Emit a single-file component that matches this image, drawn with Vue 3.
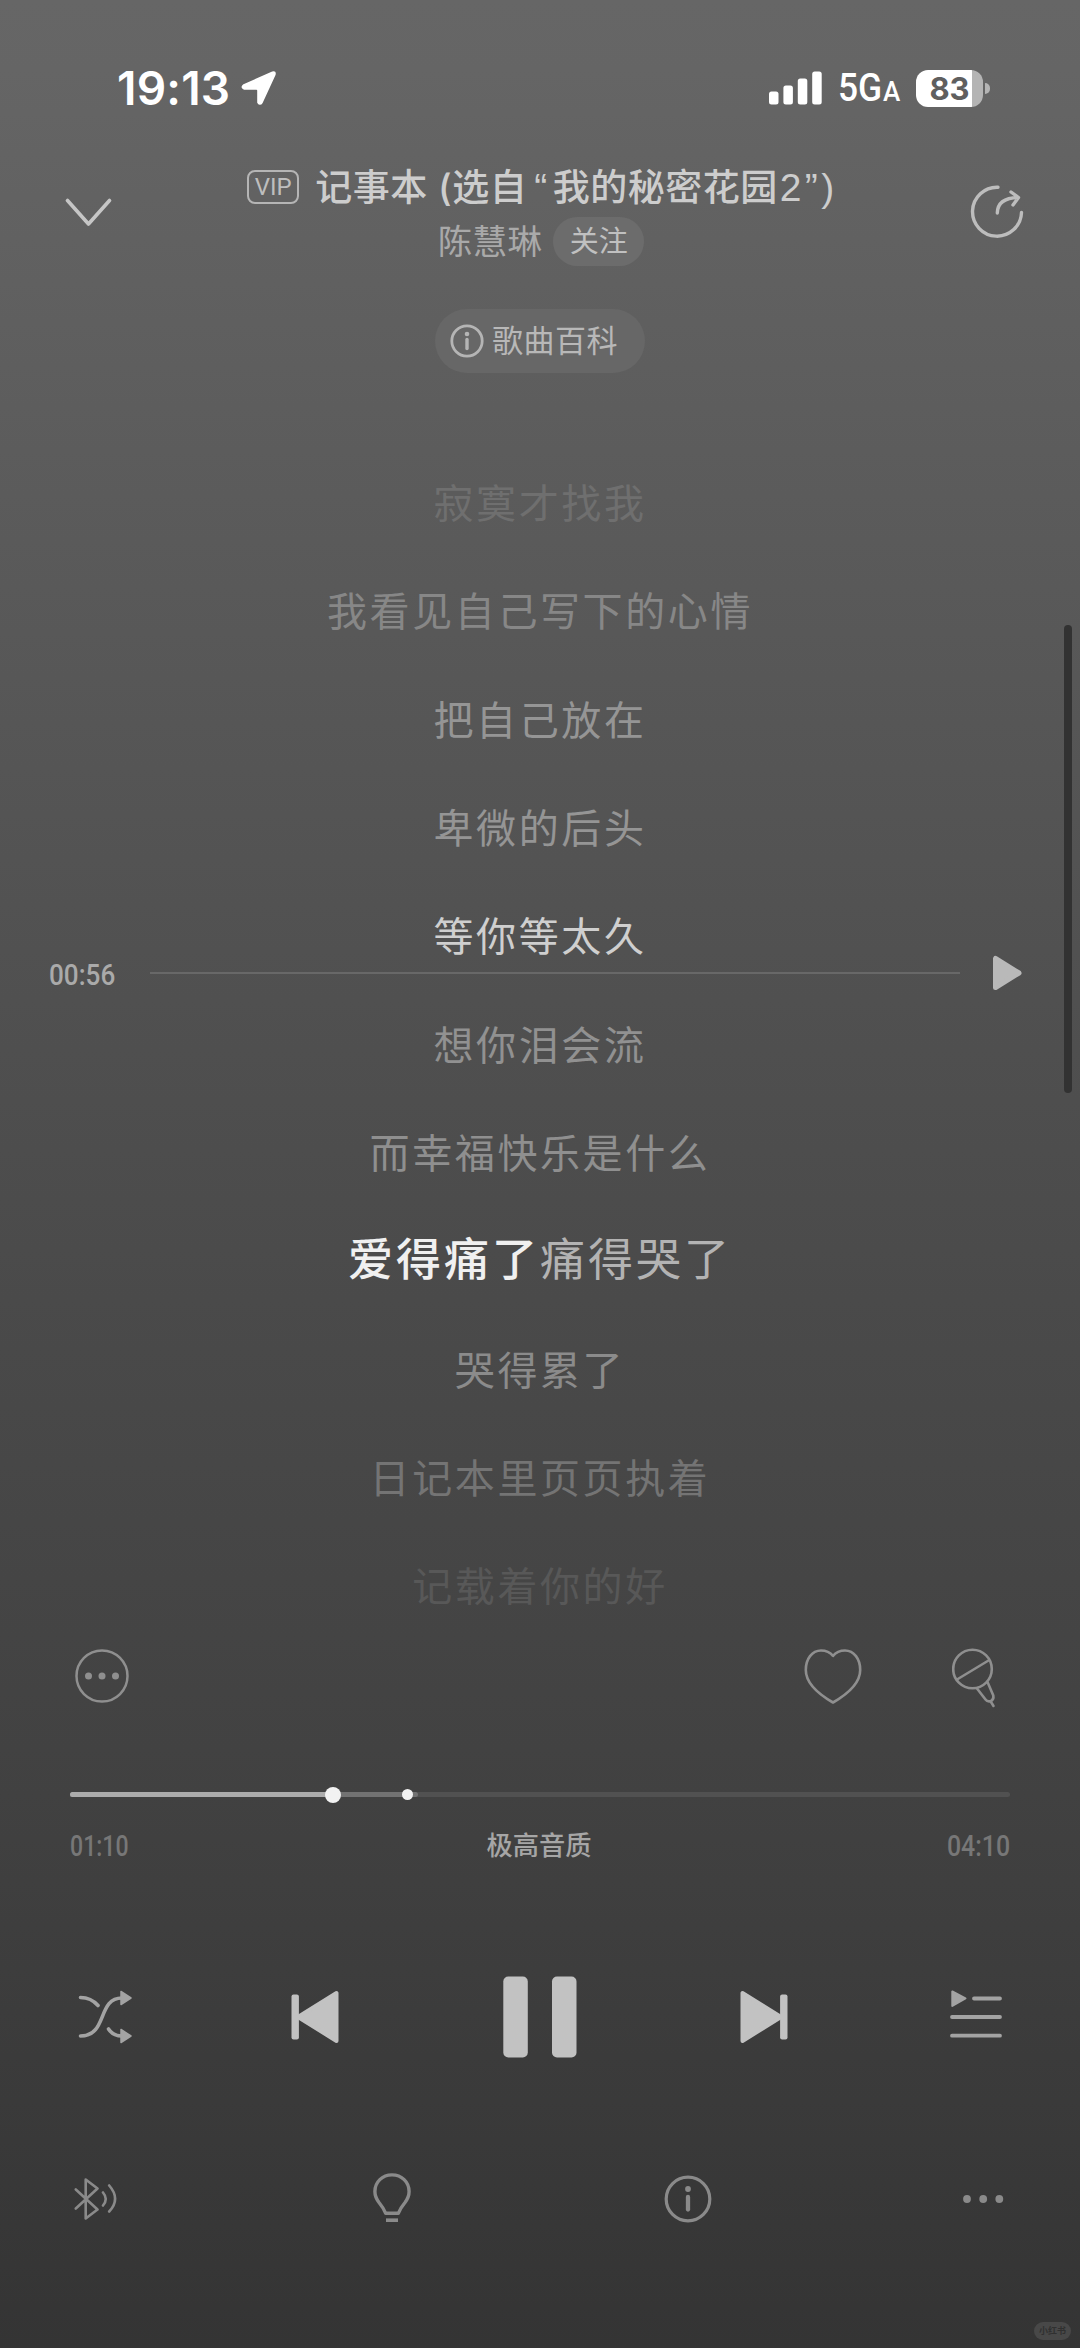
<script setup>
const lyrics = [
  { text: '寂寞才找我', tone: 'l0' },
  { text: '我看见自己写下的心情', tone: 'l1' },
  { text: '把自己放在', tone: 'l2' },
  { text: '卑微的后头', tone: 'l3' },
  { text: '等你等太久', tone: 'picked' },
  { text: '想你泪会流', tone: 'l4' },
  { text: '而幸福快乐是什么', tone: 'l5' },
  { sung: '爱得痛了', text: '痛得哭了', tone: 'current' },
  { text: '哭得累了', tone: 'l6' },
  { text: '日记本里页页执着', tone: 'l7' },
  { text: '记载着你的好', tone: 'l8' },
]
const played = 28
const buffered = 37
const mark = 35.9
</script>

<template>
  <main class="player">
    <header class="status">
      <span class="clock">19:13</span>
      <svg class="locate" width="36" height="36" viewBox="0 0 36 36">
        <path d="M2.8 15 31.5 2.2Q34.6 1.3 33.8 4.6L21 32.5Q19 35.5 17 32.5V20.5Q17 19 15.5 19H3.3Q-.4 17.500 2.800 15Z" fill="#fff" stroke="#fff" stroke-width="1.600" stroke-linejoin="round" />
      </svg>
      <svg class="signal" width="54" height="34" viewBox="0 0 54 34">
        <g fill="#fff">
          <rect x="0" y="20.500" width="9.500" height="13" rx="2.500" />
          <rect x="14.400" y="14.500" width="9.500" height="19" rx="2.500" />
          <rect x="28.800" y="7.500" width="9.500" height="26" rx="2.500" />
          <rect x="43.200" y="0.500" width="9.500" height="33" rx="2.500" />
        </g>
      </svg>
      <span class="net">5G<small>A</small></span>
      <span class="battery"><b>83</b></span>
      <i class="nub"></i>
    </header>

    <section class="head">
      <svg class="down" width="47" height="30" viewBox="0 0 47 30">
        <path d="M2.500 2.500 23.500 26 44.500 2.500" fill="none" stroke="#c6c6c6" stroke-width="3.600" stroke-linecap="round" stroke-linejoin="round" />
      </svg>
      <div class="song">
        <div class="title"><span class="vip">VIP</span><h1>记事本 (选自<q class="open">“</q>我的秘密花园<q class="close">2”)</q></h1></div>
        <div class="artist"><span>陈慧琳</span><button class="follow">关注</button></div>
      </div>
      <svg class="share" width="54" height="54" viewBox="0 0 54 54">
        <g fill="none" stroke="#bdbdbd" stroke-width="3.400" stroke-linecap="round" stroke-linejoin="round">
          <path d="M28 2.200A24.500 24.500 0 1 0 51.500 27.500" />
          <path d="M27.300 28C27.500 18 35 12.800 48 12.500M41 7 48.500 12.500 43 20" />
        </g>
      </svg>
    </section>

    <button class="wiki">
      <svg width="34" height="34" viewBox="0 0 34 34">
        <circle cx="17" cy="17" r="15.200" fill="none" stroke="#b5b5b5" stroke-width="2.800" />
        <circle cx="17" cy="10" r="2.300" fill="#b5b5b5" />
        <path d="M17 15.500V24.500" stroke="#b5b5b5" stroke-width="3.400" stroke-linecap="round" />
      </svg>
      <span>歌曲百科</span>
    </button>

    <section class="lyrics">
      <p v-for="(l, i) in lyrics" :key="i" :class="l.tone"><b v-if="l.sung">{{ l.sung }}</b>{{ l.text }}</p>
      <div class="seek">
        <time class="num">00:56</time>
        <i></i>
        <svg width="30" height="36" viewBox="0 0 30 36">
          <path d="M3.500 3.500V32.500L27 18Z" fill="#b9b9b9" stroke="#b9b9b9" stroke-width="5" stroke-linejoin="round" />
        </svg>
      </div>
    </section>

    <section class="actions">
      <svg width="54" height="54" viewBox="0 0 54 54">
        <circle cx="27" cy="27" r="25.500" fill="none" stroke="#8f8f8f" stroke-width="2.500" />
        <g fill="#8f8f8f"><circle cx="13.500" cy="27" r="3.500" /><circle cx="27" cy="27" r="3.500" /><circle cx="40.500" cy="27" r="3.500" /></g>
      </svg>
      <svg class="heart" width="58" height="56" viewBox="0 0 58 56">
        <path d="M29 7.800C25 3 20.500 2.500 17 2.500 8 2.500 1.800 11 1.800 22 1.800 36 16 47 29 54.500 42 47 56.200 36 56.200 22 56.200 11 50 2.500 41 2.500 37.500 2.500 33 3 29 7.800Z" fill="none" stroke="#8f8f8f" stroke-width="2.600" stroke-linejoin="round" />
      </svg>
      <svg class="mic" width="44" height="60" viewBox="0 0 44 60">
        <g fill="none" stroke="#8f8f8f" stroke-width="2.600" stroke-linecap="round" stroke-linejoin="round">
          <circle cx="20.500" cy="21" r="19.300" />
          <path d="M5 31.500 36.500 12.500M25 40.500 33.500 51.500Q35.500 54.300 39 53Q42 51.500 41.300 47.500L35.500 34M39 54 41.500 58" />
        </g>
      </svg>
    </section>

    <section class="progress">
      <div class="track">
        <i class="buffer" :style="{ width: buffered + '%' }"></i>
        <i class="done" :style="{ width: played + '%' }"></i>
        <i class="knob" :style="{ left: played + '%' }"></i>
        <i class="mark" :style="{ left: mark + '%' }"></i>
      </div>
      <div class="times">
        <time class="num elapsed">01:10</time>
        <span>极高音质</span>
        <time class="num total">04:10</time>
      </div>
    </section>

    <nav class="controls">
      <svg width="54" height="54" viewBox="0 0 54 54">
        <g fill="none" stroke="#a3a3a3" stroke-width="3.600" stroke-linecap="round">
          <path d="M2.500 7.500Q13 7.500 20 15.500M2.500 46C30 46 19 8 44 8M30.500 39Q35 46 44 46" />
        </g>
        <g fill="#a3a3a3" stroke="#a3a3a3" stroke-width="1.500" stroke-linejoin="round"><path d="M43 1.500V14.500L53 8ZM43 39.500V52.500L53 46Z" /></g>
      </svg>
      <svg class="prev" width="48" height="54" viewBox="0 0 48 54">
        <rect x="0.500" y="4.500" width="7.400" height="45" rx="2" fill="#c2c2c2" />
        <path d="M45.500 3V51L7 27Z" fill="#c2c2c2" stroke="#c2c2c2" stroke-width="4" stroke-linejoin="round" />
      </svg>
      <svg class="pause" width="74" height="82" viewBox="0 0 74 82">
        <rect x="0.300" y="0.500" width="24.500" height="81" rx="5" fill="#c2c2c2" />
        <rect x="49" y="0.500" width="24.500" height="81" rx="5" fill="#c2c2c2" />
      </svg>
      <svg class="next" width="48" height="54" viewBox="0 0 48 54">
        <rect x="40.100" y="4.500" width="7.400" height="45" rx="2" fill="#c2c2c2" />
        <path d="M2.500 3V51L41 27Z" fill="#c2c2c2" stroke="#c2c2c2" stroke-width="4" stroke-linejoin="round" />
      </svg>
      <svg class="queue" width="52" height="54" viewBox="0 0 52 54">
        <path d="M2.300 1.500V16L15.500 8.500Z" fill="#a3a3a3" stroke="#a3a3a3" stroke-width="2" stroke-linejoin="round" />
        <path d="M24 8.500H50M2 27H50M2 45.700H50" stroke="#a3a3a3" stroke-width="3.800" stroke-linecap="round" />
      </svg>
    </nav>

    <nav class="tools">
      <svg class="bt" width="44" height="44" viewBox="0 0 44 44">
        <g fill="none" stroke="#8a8a8a" stroke-width="2.600" stroke-linecap="round" stroke-linejoin="round">
          <path d="M1.800 12.500 23.500 32.500 11.700 41.500V2.500L23.500 11.500 1.800 31.500M29 15.500Q34.500 22 29 28.500M35.200 8.500Q47 22 35.200 34.500" />
        </g>
      </svg>
      <svg class="bulb" width="38" height="52" viewBox="0 0 38 52">
        <path d="M12.700 40.300Q10.500 35 6 29.500C2.500 25 1.900 22 1.900 18.600 1.900 9 9.300 1.900 19 1.900S36.100 9 36.100 18.600C36.100 22 35.500 25 32 29.500Q27.500 35 25.300 40.300Z" fill="none" stroke="#8a8a8a" stroke-width="3.400" stroke-linejoin="round" />
        <path d="M13 47.200H25" stroke="#8a8a8a" stroke-width="3.600" />
      </svg>
      <svg class="about" width="48" height="48" viewBox="0 0 48 48">
        <circle cx="24" cy="24" r="21.800" fill="none" stroke="#8a8a8a" stroke-width="3.200" />
        <circle cx="24" cy="14" r="2.900" fill="#8a8a8a" />
        <path d="M24 22V34.500" stroke="#8a8a8a" stroke-width="4.300" stroke-linecap="round" />
      </svg>
      <svg width="42" height="10" viewBox="0 0 42 10">
        <g fill="#8a8a8a"><circle cx="5" cy="5" r="3.900" /><circle cx="21.200" cy="5" r="3.900" /><circle cx="37.300" cy="5" r="3.900" /></g>
      </svg>
    </nav>

    <i class="scrollbar"></i>
    <span class="stamp">小红书</span>
  </main>
</template>

<style>
body { margin: 0; }
</style>

<style scoped>
* { box-sizing: border-box; }
.player {
  position: relative;
  width: 1080px;
  height: 2348px;
  display: flex;
  flex-direction: column;
  overflow: hidden;
  font-family: Inter, "Noto Sans CJK SC", sans-serif;
  background: linear-gradient(#666 0, #656565 70px, #5c5c5c 450px, #515151 950px, #494949 1350px, #424242 1750px, #3a3a3a 2100px, #343434 2348px);
}
svg { display: block; flex: none; }
button { border: 0; font-family: inherit; padding: 0; }

.status {
  height: 140px;
  padding: 36px 90px 0 117px;
  display: flex;
  align-items: center;
  color: #fff;
}
.clock { width: 124px; font-size: 46px; font-weight: 600; letter-spacing: .2px; white-space: nowrap; }
.signal { margin-left: auto; }
.net { width: 62px; margin-left: 15px; font: 500 38px/1 Roboto, sans-serif; white-space: nowrap; transform: scaleX(.93); transform-origin: 0 50%; }
.net small { font-size: 28px; margin-left: 1px; }
.battery {
  width: 67px;
  height: 37px;
  margin-left: 16px;
  border-radius: 12px;
  background: linear-gradient(90deg, #fff 55.500px, #b4b4b4 55.500px);
  color: #5f5f5f;
  display: flex;
  align-items: center;
  justify-content: center;
}
.battery b { font-size: 31px; line-height: 1; font-weight: 700; }
.nub { width: 5px; height: 11px; margin-left: 2px; border-radius: 0 6px 6px 0; background: #b4b4b4; }

.head { height: 169px; padding: 22px 56px 0 65px; display: flex; align-items: flex-start; }
.down { margin-top: 36px; }
.share { margin-top: 23px; }
.song { flex: 1; display: flex; flex-direction: column; align-items: center; }
.title { height: 50px; display: flex; align-items: center; }
.vip {
  width: 52px;
  height: 34px;
  border: 2px solid #b5b5b5;
  border-radius: 8px;
  color: #bebebe;
  font: 400 24px/30px Roboto, sans-serif;
  text-align: center;
}
.title h1 { margin: 2px 0 0 16px; font-size: 37px; line-height: 50px; font-weight: 500; letter-spacing: .5px; color: #cdcdcd; white-space: nowrap; }
.title q { font-family: "Liberation Sans", sans-serif; font-size: 39px; font-weight: 400; line-height: 1; }
.title q::before, .title q::after { content: none; }
.title .open { margin: 0 5px 0 7px; }
.title .close { margin-left: 2px; letter-spacing: 3.500px; margin-right: -3px; }
.artist { margin-top: 5px; display: flex; align-items: center; font-size: 34.500px; line-height: 49px; color: #a9a9a9; }
.artist span { letter-spacing: .3px; }
.follow { width: 91px; height: 49px; margin-left: 11px; border-radius: 25px; background: #6c6c6c; color: #c0c0c0; font-size: 29px; line-height: 49px; }
.wiki {
  width: 210px;
  height: 64px;
  align-self: center;
  border-radius: 32px;
  background: #676767;
  color: #b8b8b8;
  font-size: 31px;
  letter-spacing: .5px;
  line-height: 64px;
  display: flex;
  align-items: center;
  padding-left: 15px;
  gap: 8px;
}

.lyrics { position: relative; margin-top: 77px; height: 1192px; }
.lyrics p {
  height: 108.330px;
  margin: 0;
  display: flex;
  align-items: center;
  justify-content: center;
  font-size: 40px;
  letter-spacing: 2.600px;
  line-height: 1;
}
.l0 { color: #6f6f6f; }
.l1 { color: #878787; }
.l2 { color: #959595; }
.l3 { color: #959595; }
.picked { color: #cfcfcf; }
.l4 { color: #919191; }
.l5 { color: #8f8f8f; }
.l6 { color: #8b8b8b; }
.l7 { color: #747474; }
.l8 { color: #585858; }
.lyrics .current { font-size: 45px; letter-spacing: 3px; color: #b3b3b3; padding-bottom: 5px; }
.current b { font-weight: 500; color: #f0f0f0; }

.seek { position: absolute; left: 49px; right: 58px; top: 505px; height: 36px; display: flex; align-items: center; }
.seek i { flex: 1; height: 2px; margin: 0 32px 0 35px; background: #686868; }
.num { font-family: Roboto, sans-serif; font-weight: 500; font-size: 30px; line-height: 1; transform: scaleX(.87); transform-origin: 0 50%; }
.seek .num { width: 66px; margin-top: 4px; color: #aaa; }

.actions { height: 70px; margin-top: -1px; padding: 0 84px 0 75px; display: flex; align-items: center; }
.heart { margin: 0 90px 0 auto; }
.mic { margin-top: 4px; }

.progress { height: 166px; padding: 81px 70px 0; }
.track { position: relative; height: 5px; border-radius: 3px; background: #515151; }
.track i { position: absolute; border-radius: 3px; }
.buffer, .done { left: 0; top: 0; height: 5px; }
.buffer { background: #727272; }
.done { background: #acacac; }
.track .knob { width: 16px; height: 16px; top: -5.500px; margin-left: -8px; border-radius: 50%; background: #f2f2f2; }
.track .mark { width: 11px; height: 11px; top: -3px; margin-left: -5.500px; border-radius: 50%; background: #f2f2f2; }
.times { height: 40px; margin-top: 29px; display: flex; align-items: center; justify-content: space-between; color: #777; }
.times .elapsed { transform: scaleX(.77); }
.times .total { transform: scaleX(.83); transform-origin: 100% 50%; }
.times span { margin-right: 2px; font-size: 26.300px; line-height: 1; font-weight: 500; color: #a6a6a6; }

.controls { height: 280px; padding: 0 78px; display: flex; align-items: center; }
.prev { margin-left: 159px; }
.pause { margin-left: 164px; }
.next { margin-left: 163px; }
.queue { margin-left: 162px; }
.tools { height: 84px; padding: 0 76px 0 74px; display: flex; align-items: center; justify-content: space-between; }
.bulb { margin-left: 5px; }
.about { margin-left: 3px; }

.scrollbar { position: absolute; left: 1064px; top: 625px; width: 8px; height: 468px; border-radius: 4px; background: #323232; }
.stamp {
  position: absolute;
  right: 9px;
  bottom: 8px;
  width: 37px;
  height: 18px;
  border-radius: 9px;
  background: #484848;
  color: #303030;
  font-size: 9px;
  line-height: 17px;
  font-weight: 700;
  text-align: center;
}
</style>
